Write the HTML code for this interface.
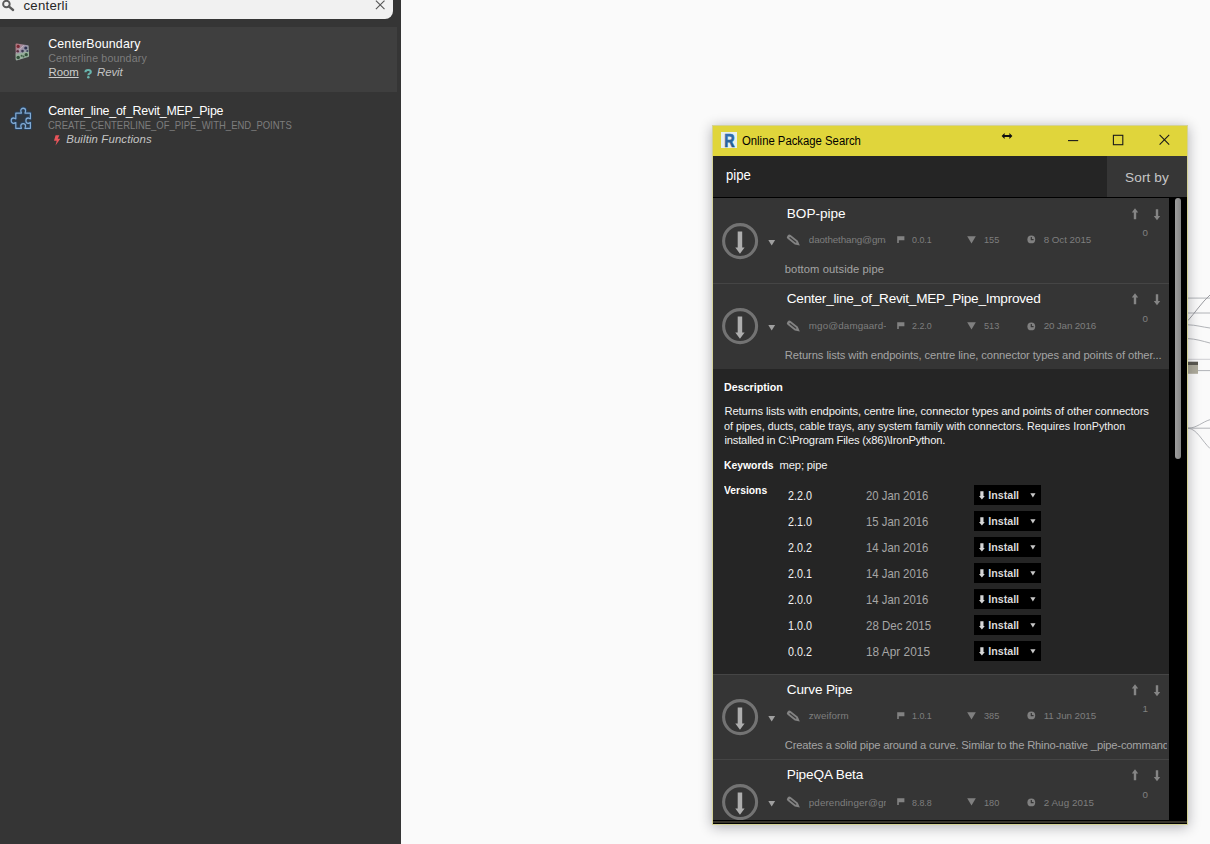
<!DOCTYPE html>
<html lang="en"><head><meta charset="utf-8"><title>Online Package Search</title>
<style>
html,body{margin:0;padding:0}
body{width:1210px;height:844px;overflow:hidden;position:relative;background:#fafafa;font-family:"Liberation Sans", sans-serif;}
.t{position:absolute;white-space:nowrap;line-height:1;display:block}
.clip{position:absolute;overflow:hidden;white-space:nowrap;line-height:1}
.clip>.t{left:0;top:0}
.ic{position:absolute;display:block;overflow:visible}
.abs{position:absolute}
#left{position:absolute;left:0;top:0;width:401px;height:844px;background:#353535}
#sbox{position:absolute;left:0;top:0;width:393px;height:19px;background:#f1f1f1;border-bottom-right-radius:8px}
#hl{position:absolute;left:0;top:27px;width:397px;height:65px;background:#3f3f3f}
#dlg{position:absolute;left:712px;top:125px;width:476px;height:700px;background:#000;box-shadow:0 2px 12px rgba(20,20,30,.32)}
#dlgb{position:absolute;left:712px;top:125px;width:474px;height:698px;border:1px solid #d4d296;pointer-events:none}
#tb{position:absolute;left:712px;top:125px;width:476px;height:31px;background:#e0d53b}
#sb{position:absolute;left:713px;top:156px;width:394px;height:41px;background:#252525}
#sort{position:absolute;left:1107px;top:156px;width:80px;height:41px;background:#363636}
.it{position:absolute;left:713px;width:456px;background:#353535}
.sep{position:absolute;left:713px;width:456px;height:1px;background:#454545}
#det{position:absolute;left:713px;top:369px;width:456px;height:305px;background:#252525}
#thumb{position:absolute;left:1175px;top:198px;width:6px;height:261px;background:linear-gradient(90deg,#9c9c9c,#868686);border-radius:3px}
.ib{position:absolute;left:974px;width:67px;height:19.6px;background:#000}
</style></head><body>
<svg class="ic" style="left:1188px;top:280px" width="22" height="180" viewBox="0 0 22 180">
<g fill="none" stroke="#a9abb0" stroke-width="0.9">
<path d="M0 18.1H22"/><path d="M0 33H22"/><path d="M0 44.8C8 45 14 47 22 48"/><path d="M0 58.6C8 59 14 61 22 63"/><path d="M0 79.3H22" stroke="#c9cacd"/>
<path d="M10 90.6H22"/><path d="M0 148.2C9 148 14 142 22 139.7"/><path d="M0 148.2H22"/><path d="M0 148.2C9 149 14 161 22 168.5"/>
<path d="M0 40.5C6 34 14 22 22 15" stroke="#8f9095"/>
</g><rect x="0" y="81.7" width="10" height="3.3" fill="#5a5850"/><rect x="0" y="85" width="10" height="8.8" fill="#aeab9c"/></svg>
<div id="left"></div><div id="hl"></div><div id="sbox"></div>
<svg class="ic" style="left:1px;top:0px" width="14" height="12" viewBox="0 0 14 12"><circle cx="5.4" cy="4" r="3.3" fill="none" stroke="#5a5a5a" stroke-width="1.9"/><path d="M7.8 6.4l4.3 3.6" stroke="#5a5a5a" stroke-width="2.3" stroke-linecap="round"/></svg>
<svg class="ic" style="left:375px;top:0px" width="11" height="11" viewBox="0 0 11 11"><path d="M0.9 0.6l8.6 8.6M9.5 0.6l-8.6 8.6" stroke="#555" stroke-width="1.1" fill="none"/></svg>
<!-- row1 icon -->
<svg class="ic" style="left:13px;top:41px" width="19" height="22" viewBox="0 0 19 22"><defs><linearGradient id="g1" x1="0" y1="0" x2="1" y2="1"><stop offset="0" stop-color="#b0757d"/><stop offset=".45" stop-color="#9a95ab"/><stop offset="1" stop-color="#8fac96"/></linearGradient></defs>
<path d="M3.6 3.5L14.6 5.4L15 14.9L3.9 18.3Z" fill="url(#g1)" stroke="url(#g1)" stroke-width="2.2" stroke-linejoin="round"/>
<path d="M2.7 12.8L15.8 10.6L15.9 15.1L4 19.2Q2.7 19.4 2.7 18Z" fill="#97b19b" opacity=".9"/>
<path d="M3.2 12.3L10.8 4.3" stroke="#cfc9d2" stroke-width="0.7"/>
<g><circle cx="5.2" cy="5.4" r="1.6" fill="#7a2832"/><circle cx="12.8" cy="7" r="1.6" fill="#2f3350"/><circle cx="4.7" cy="10.3" r="1.3" fill="#5a3040"/><circle cx="9.5" cy="10.1" r="1.35" fill="#3a3850"/><circle cx="14.3" cy="10" r="1.1" fill="#3f4660"/><circle cx="13.2" cy="13.7" r="1.65" fill="#33503a"/><circle cx="5.2" cy="16.4" r="1.75" fill="#33503a"/><circle cx="8.6" cy="14.7" r="1" fill="#3f6046"/><circle cx="10.5" cy="15.6" r="1" fill="#3f6046"/></g></svg>
<svg class="ic" style="left:83.5px;top:68.9px" width="8" height="10" viewBox="0 0 8 10"><path d="M1.4 3.3q.1-2.3 2.8-2.3 2.6 0 2.6 2 0 1-1.3 1.7-1.1 .6-1.1 1.5" fill="none" stroke="#69b5ae" stroke-width="2.1"/><circle cx="4.3" cy="8.3" r="1.25" fill="#69b5ae"/></svg>
<!-- row2 icon -->
<svg class="ic" style="left:9px;top:105.7px" width="24" height="26" viewBox="0 0 24 26"><g transform="scale(1 1.07)"><path d="M6.8 6.7h5.6c.3-.4-.6-1.3-.6-2.3 0-1.3 1-2.3 2.4-2.3s2.4 1 2.4 2.3c0 1-.9 1.9-.6 2.3h5.4v5.2c-.4.3-1.2-.7-2.2-.7-1.3 0-2.3 1.1-2.3 2.5s1 2.5 2.3 2.5c1 0 1.8-1 2.2-.7v5.4h-5.4c-.3-.4.6-1.2.6-2.2 0-1.3-1-2.3-2.4-2.3s-2.4 1-2.4 2.3c0 1 .9 1.8.6 2.2h-5.6v-5.4c-.4-.3-1.2.7-2.2.7-1.3 0-2.4-1.1-2.4-2.5s1.1-2.5 2.4-2.5c1 0 1.8 1 2.2.7z" fill="#2b3a4a" stroke="#1f4a7a" stroke-width="3.2" stroke-linejoin="round" opacity=".55"/><path d="M6.8 6.7h5.6c.3-.4-.6-1.3-.6-2.3 0-1.3 1-2.3 2.4-2.3s2.4 1 2.4 2.3c0 1-.9 1.9-.6 2.3h5.4v5.2c-.4.3-1.2-.7-2.2-.7-1.3 0-2.3 1.1-2.3 2.5s1 2.5 2.3 2.5c1 0 1.8-1 2.2-.7v5.4h-5.4c-.3-.4.6-1.2.6-2.2 0-1.3-1-2.3-2.4-2.3s-2.4 1-2.4 2.3c0 1 .9 1.8.6 2.2h-5.6v-5.4c-.4-.3-1.2.7-2.2.7-1.3 0-2.4-1.1-2.4-2.5s1.1-2.5 2.4-2.5c1 0 1.8 1 2.2.7z" fill="none" stroke="#82acd6" stroke-width="1.2" stroke-linejoin="round"/></g></svg>
<svg class="ic" style="left:53px;top:135px" width="8" height="11" viewBox="0 0 8 11"><path d="M2.6 0.2h3.8l-1.7 3.6h2.6l-4.8 6.8 1.2-4.9h-2.7z" fill="#e8545a"/></svg>
<span class="t m0" style="left:23.5px;top:-1.0px;font-size:13.2px;color:#262626;letter-spacing:0.238px;">centerli</span><span class="t m1" style="left:48.2px;top:38.0px;font-size:12.4px;color:#ffffff;letter-spacing:0.153px;">CenterBoundary</span><span class="t m2" style="left:48.2px;top:53.0px;font-size:10.6px;color:#7d7d7d;letter-spacing:0.173px;">Centerline boundary</span><span class="t m3" style="left:48.6px;top:67.0px;font-size:11.4px;color:#cdcdcd;letter-spacing:-0.083px;text-decoration:underline;text-underline-offset:1px;text-decoration-thickness:1px;">Room</span><span class="t m4" style="left:97.0px;top:67.0px;font-size:11.4px;color:#c4c4c4;font-style:italic;letter-spacing:-0.078px;">Revit</span><span class="t m5" style="left:48.2px;top:105.0px;font-size:12.4px;color:#ffffff;letter-spacing:-0.209px;">Center_line_of_Revit_MEP_Pipe</span><span class="t m6" style="left:48.2px;top:120.0px;font-size:10.6px;color:#7d7d7d;transform:scaleX(0.8948);transform-origin:0 0;">CREATE_CENTERLINE_OF_PIPE_WITH_END_POINTS</span><span class="t m7" style="left:66.2px;top:134.0px;font-size:11.4px;color:#c4c4c4;font-style:italic;letter-spacing:0.123px;">Builtin Functions</span>
<!-- dialog -->
<div id="dlg"></div>
<div id="tb"></div>
<div id="sb"></div><div id="sort"></div>
<div class="it" style="top:198px;height:85px"></div>
<div class="sep" style="top:283px"></div>
<div class="it" style="top:284px;height:85px"></div>
<div id="det"></div>
<div class="sep" style="top:674px"></div>
<div class="it" style="top:675px;height:84px"></div>
<div class="sep" style="top:759px"></div>
<div class="it" style="top:760px;height:60px"></div>
<div id="clipbox" style="position:absolute;left:0;top:0;width:1210px;height:820px;overflow:hidden">
<span class="t m11" style="left:786.8px;top:207.0px;font-size:13.6px;color:#ffffff;letter-spacing:-0.018px;">BOP-pipe</span><div class="clip" style="left:808.8px;top:235.0px;width:77.6px;height:12.25px;"><span class="t m12" style="font-size:9.8px;color:#7e7e7e;letter-spacing:-0.11px;">daothethang@gmail.com</span></div><span class="t m13" style="left:912.3px;top:235.0px;font-size:9.8px;color:#7e7e7e;transform:scaleX(0.9084);transform-origin:0 0;">0.0.1</span><span class="t m14" style="left:983.8px;top:235.0px;font-size:9.8px;color:#7e7e7e;transform:scaleX(0.9352);transform-origin:0 0;">155</span><span class="t m15" style="left:1043.7px;top:235.0px;font-size:9.8px;color:#7e7e7e;letter-spacing:-0.036px;">8 Oct 2015</span><span class="t m16" style="left:1142.6px;top:228.0px;font-size:9.8px;color:#808080;">0</span><span class="t m17" style="left:784.8px;top:264.0px;font-size:11.2px;color:#a4a4a4;letter-spacing:0.083px;">bottom outside pipe</span><svg class="ic" style="left:720px;top:221.0px" width="40" height="40" viewBox="0 0 40 40"><circle cx="20.1" cy="20.1" r="16.5" fill="none" stroke="#737373" stroke-width="3.1"/><path d="M17.7 10.5h4.5v16h2.4l-4.65 6.3-4.65-6.3h2.4z" fill="#aeaeae"/></svg><svg class="ic" style="left:767.6px;top:239.9px" width="8" height="6" viewBox="0 0 8 6"><path d="M0.3 0h6.8l-3.4 5.5z" fill="#a0a0a0"/></svg><svg class="ic" style="left:786px;top:233.5px" width="16" height="13" viewBox="0 0 16 13"><g transform="translate(1.7 1.8) rotate(38.5)"><path d="M1.8 -2.45h9.2l4.5 2.45-4.5 2.45h-9.2q-2 0-2-2.45t2-2.45z" fill="#838383"/><path d="M2.8 0h7.6" stroke="#3a3a3a" stroke-width="1.1" stroke-linecap="round"/></g></svg><svg class="ic" style="left:896.6px;top:235.8px" width="8" height="8" viewBox="0 0 8 8"><path d="M0.2 0.3h7.2v4h-5.6v2.6h-1.6z" fill="#828282"/></svg><svg class="ic" style="left:966.6px;top:235.6px" width="9" height="8" viewBox="0 0 9 8"><path d="M0.2 0.2h8.6l-4.3 7.4z" fill="#808080"/></svg><svg class="ic" style="left:1026.7px;top:235.3px" width="9" height="9" viewBox="0 0 9 9"><circle cx="4.3" cy="4.4" r="3.9" fill="#808080"/><path d="M4.3 2v2.7h2.3" fill="none" stroke="#353535" stroke-width="1.2"/></svg><svg class="ic" style="left:1131px;top:207.9px" width="8" height="12" viewBox="0 0 8 12"><path d="M4 0.2l3.2 4.3h-2v6.7h-2.4v-6.7h-2z" fill="#858585"/></svg><svg class="ic" style="left:1153px;top:208.6px" width="8" height="12" viewBox="0 0 8 12"><path d="M4 11.2l3.2-4.3h-2v-6.7h-2.4v6.7h-2z" fill="#858585"/></svg><span class="t m18" style="left:786.8px;top:292.0px;font-size:13.6px;color:#ffffff;letter-spacing:-0.245px;">Center_line_of_Revit_MEP_Pipe_Improved</span><div class="clip" style="left:808.8px;top:321.0px;width:77.6px;height:12.25px;"><span class="t m19" style="font-size:9.8px;color:#7e7e7e;letter-spacing:0.113px;">mgo@damgaard-ri.dk</span></div><span class="t m20" style="left:912.3px;top:321.0px;font-size:9.8px;color:#7e7e7e;transform:scaleX(0.9084);transform-origin:0 0;">2.2.0</span><span class="t m21" style="left:983.8px;top:321.0px;font-size:9.8px;color:#7e7e7e;transform:scaleX(0.9352);transform-origin:0 0;">513</span><span class="t m22" style="left:1043.7px;top:321.0px;font-size:9.8px;color:#7e7e7e;letter-spacing:-0.146px;">20 Jan 2016</span><span class="t m23" style="left:1142.6px;top:314.0px;font-size:9.8px;color:#808080;">0</span><span class="t m24" style="left:784.8px;top:350.0px;font-size:11.2px;color:#a4a4a4;letter-spacing:-0.086px;">Returns lists with endpoints, centre line, connector types and points of other...</span><svg class="ic" style="left:720px;top:306.2px" width="40" height="40" viewBox="0 0 40 40"><circle cx="20.1" cy="20.1" r="16.5" fill="none" stroke="#737373" stroke-width="3.1"/><path d="M17.7 10.5h4.5v16h2.4l-4.65 6.3-4.65-6.3h2.4z" fill="#aeaeae"/></svg><svg class="ic" style="left:767.6px;top:325.1px" width="8" height="6" viewBox="0 0 8 6"><path d="M0.3 0h6.8l-3.4 5.5z" fill="#a0a0a0"/></svg><svg class="ic" style="left:786px;top:319.7px" width="16" height="13" viewBox="0 0 16 13"><g transform="translate(1.7 1.8) rotate(38.5)"><path d="M1.8 -2.45h9.2l4.5 2.45-4.5 2.45h-9.2q-2 0-2-2.45t2-2.45z" fill="#838383"/><path d="M2.8 0h7.6" stroke="#3a3a3a" stroke-width="1.1" stroke-linecap="round"/></g></svg><svg class="ic" style="left:896.6px;top:322.0px" width="8" height="8" viewBox="0 0 8 8"><path d="M0.2 0.3h7.2v4h-5.6v2.6h-1.6z" fill="#828282"/></svg><svg class="ic" style="left:966.6px;top:321.8px" width="9" height="8" viewBox="0 0 9 8"><path d="M0.2 0.2h8.6l-4.3 7.4z" fill="#808080"/></svg><svg class="ic" style="left:1026.7px;top:321.5px" width="9" height="9" viewBox="0 0 9 9"><circle cx="4.3" cy="4.4" r="3.9" fill="#808080"/><path d="M4.3 2v2.7h2.3" fill="none" stroke="#353535" stroke-width="1.2"/></svg><svg class="ic" style="left:1131px;top:293.1px" width="8" height="12" viewBox="0 0 8 12"><path d="M4 0.2l3.2 4.3h-2v6.7h-2.4v-6.7h-2z" fill="#858585"/></svg><svg class="ic" style="left:1153px;top:293.8px" width="8" height="12" viewBox="0 0 8 12"><path d="M4 11.2l3.2-4.3h-2v-6.7h-2.4v6.7h-2z" fill="#858585"/></svg><span class="t m25" style="left:786.8px;top:683.0px;font-size:13.6px;color:#ffffff;letter-spacing:-0.153px;">Curve Pipe</span><span class="t m26" style="left:808.8px;top:711.0px;font-size:9.8px;color:#7e7e7e;letter-spacing:0.08px;">zweiform</span><span class="t m27" style="left:912.3px;top:711.0px;font-size:9.8px;color:#7e7e7e;transform:scaleX(0.9084);transform-origin:0 0;">1.0.1</span><span class="t m28" style="left:983.8px;top:711.0px;font-size:9.8px;color:#7e7e7e;transform:scaleX(0.9352);transform-origin:0 0;">385</span><span class="t m29" style="left:1043.7px;top:711.0px;font-size:9.8px;color:#7e7e7e;letter-spacing:-0.078px;">11 Jun 2015</span><span class="t m30" style="left:1142.6px;top:704.0px;font-size:9.8px;color:#808080;">1</span><div class="clip" style="left:784.8px;top:740.0px;width:382.5px;height:14.0px;"><span class="t m31" style="font-size:11.2px;color:#a4a4a4;letter-spacing:-0.171px;">Creates a solid pipe around a curve. Similar to the Rhino-native _pipe-command.</span></div><svg class="ic" style="left:720px;top:697.0px" width="40" height="40" viewBox="0 0 40 40"><circle cx="20.1" cy="20.1" r="16.5" fill="none" stroke="#737373" stroke-width="3.1"/><path d="M17.7 10.5h4.5v16h2.4l-4.65 6.3-4.65-6.3h2.4z" fill="#aeaeae"/></svg><svg class="ic" style="left:767.6px;top:715.9px" width="8" height="6" viewBox="0 0 8 6"><path d="M0.3 0h6.8l-3.4 5.5z" fill="#a0a0a0"/></svg><svg class="ic" style="left:786px;top:709.5px" width="16" height="13" viewBox="0 0 16 13"><g transform="translate(1.7 1.8) rotate(38.5)"><path d="M1.8 -2.45h9.2l4.5 2.45-4.5 2.45h-9.2q-2 0-2-2.45t2-2.45z" fill="#838383"/><path d="M2.8 0h7.6" stroke="#3a3a3a" stroke-width="1.1" stroke-linecap="round"/></g></svg><svg class="ic" style="left:896.6px;top:711.8px" width="8" height="8" viewBox="0 0 8 8"><path d="M0.2 0.3h7.2v4h-5.6v2.6h-1.6z" fill="#828282"/></svg><svg class="ic" style="left:966.6px;top:711.6px" width="9" height="8" viewBox="0 0 9 8"><path d="M0.2 0.2h8.6l-4.3 7.4z" fill="#808080"/></svg><svg class="ic" style="left:1026.7px;top:711.3px" width="9" height="9" viewBox="0 0 9 9"><circle cx="4.3" cy="4.4" r="3.9" fill="#808080"/><path d="M4.3 2v2.7h2.3" fill="none" stroke="#353535" stroke-width="1.2"/></svg><svg class="ic" style="left:1131px;top:683.9px" width="8" height="12" viewBox="0 0 8 12"><path d="M4 0.2l3.2 4.3h-2v6.7h-2.4v-6.7h-2z" fill="#858585"/></svg><svg class="ic" style="left:1153px;top:684.6px" width="8" height="12" viewBox="0 0 8 12"><path d="M4 11.2l3.2-4.3h-2v-6.7h-2.4v6.7h-2z" fill="#858585"/></svg><span class="t m32" style="left:786.8px;top:768.0px;font-size:13.6px;color:#ffffff;letter-spacing:-0.137px;">PipeQA Beta</span><div class="clip" style="left:808.8px;top:798.0px;width:77.6px;height:12.25px;"><span class="t m33" style="font-size:9.8px;color:#7e7e7e;letter-spacing:0.116px;">pderendinger@gmail.com</span></div><span class="t m34" style="left:912.3px;top:798.0px;font-size:9.8px;color:#7e7e7e;transform:scaleX(0.9084);transform-origin:0 0;">8.8.8</span><span class="t m35" style="left:983.8px;top:798.0px;font-size:9.8px;color:#7e7e7e;transform:scaleX(0.9352);transform-origin:0 0;">180</span><span class="t m36" style="left:1043.7px;top:798.0px;font-size:9.8px;color:#7e7e7e;letter-spacing:0.087px;">2 Aug 2015</span><span class="t m37" style="left:1142.6px;top:790.0px;font-size:9.8px;color:#808080;">0</span><svg class="ic" style="left:720px;top:782.3px" width="40" height="40" viewBox="0 0 40 40"><circle cx="20.1" cy="20.1" r="16.5" fill="none" stroke="#737373" stroke-width="3.1"/><path d="M17.7 10.5h4.5v16h2.4l-4.65 6.3-4.65-6.3h2.4z" fill="#aeaeae"/></svg><svg class="ic" style="left:767.6px;top:801.2px" width="8" height="6" viewBox="0 0 8 6"><path d="M0.3 0h6.8l-3.4 5.5z" fill="#a0a0a0"/></svg><svg class="ic" style="left:786px;top:795.8px" width="16" height="13" viewBox="0 0 16 13"><g transform="translate(1.7 1.8) rotate(38.5)"><path d="M1.8 -2.45h9.2l4.5 2.45-4.5 2.45h-9.2q-2 0-2-2.45t2-2.45z" fill="#838383"/><path d="M2.8 0h7.6" stroke="#3a3a3a" stroke-width="1.1" stroke-linecap="round"/></g></svg><svg class="ic" style="left:896.6px;top:798.1px" width="8" height="8" viewBox="0 0 8 8"><path d="M0.2 0.3h7.2v4h-5.6v2.6h-1.6z" fill="#828282"/></svg><svg class="ic" style="left:966.6px;top:797.9px" width="9" height="8" viewBox="0 0 9 8"><path d="M0.2 0.2h8.6l-4.3 7.4z" fill="#808080"/></svg><svg class="ic" style="left:1026.7px;top:797.6px" width="9" height="9" viewBox="0 0 9 9"><circle cx="4.3" cy="4.4" r="3.9" fill="#808080"/><path d="M4.3 2v2.7h2.3" fill="none" stroke="#353535" stroke-width="1.2"/></svg><svg class="ic" style="left:1131px;top:769.2px" width="8" height="12" viewBox="0 0 8 12"><path d="M4 0.2l3.2 4.3h-2v6.7h-2.4v-6.7h-2z" fill="#858585"/></svg><svg class="ic" style="left:1153px;top:769.9px" width="8" height="12" viewBox="0 0 8 12"><path d="M4 11.2l3.2-4.3h-2v-6.7h-2.4v6.7h-2z" fill="#858585"/></svg>
</div>
<span class="t m38" style="left:724.4px;top:382.0px;font-size:11.2px;color:#ffffff;font-weight:700;transform:scaleX(0.957);transform-origin:0 0;">Description</span><span class="t m39" style="left:724.4px;top:406.0px;font-size:11.2px;color:#f2f2f2;letter-spacing:-0.094px;">Returns lists with endpoints, centre line, connector types and points of other connectors</span><span class="t m40" style="left:724.4px;top:421.0px;font-size:11.2px;color:#f2f2f2;transform:scaleX(0.9633);transform-origin:0 0;">of pipes, ducts, cable trays, any system family with connectors. Requires IronPython</span><span class="t m41" style="left:724.4px;top:435.0px;font-size:11.2px;color:#f2f2f2;letter-spacing:-0.17px;">installed in C:\Program Files (x86)\IronPython.</span><span class="t m42" style="left:724.4px;top:460.0px;font-size:11.2px;color:#ffffff;font-weight:700;transform:scaleX(0.9258);transform-origin:0 0;">Keywords</span><span class="t m43" style="left:779.6px;top:460.0px;font-size:11.2px;color:#f2f2f2;letter-spacing:-0.158px;">mep; pipe</span><span class="t m44" style="left:724.2px;top:485.0px;font-size:11.2px;color:#ffffff;font-weight:700;transform:scaleX(0.9262);transform-origin:0 0;">Versions</span><span class="t m45" style="left:787.6px;top:490.0px;font-size:12.8px;color:#f2f2f2;transform:scaleX(0.8395);transform-origin:0 0;">2.2.0</span><span class="t m46" style="left:866.4px;top:490.0px;font-size:12.8px;color:#a6a6a6;transform:scaleX(0.8843);transform-origin:0 0;">20 Jan 2016</span><div class="ib" style="top:485.3px"></div><svg class="ic" style="left:979px;top:491.2px" width="6" height="9" viewBox="0 0 6 9"><path d="M1.3 0.3h3.2v4.7h1.3l-2.9 3.5-2.9-3.5h1.3z" fill="#d6d6d6"/></svg><span class="t m47" style="left:988.2px;top:490.0px;font-size:10.7px;color:#d8d8d8;font-weight:700;">Install</span><svg class="ic" style="left:1030px;top:493.1px" width="6" height="5" viewBox="0 0 6 5"><path d="M0.3 0.3h5.2l-2.6 4.2z" fill="#c8c8c8"/></svg><span class="t m48" style="left:787.6px;top:516.0px;font-size:12.8px;color:#f2f2f2;transform:scaleX(0.8395);transform-origin:0 0;">2.1.0</span><span class="t m49" style="left:866.4px;top:516.0px;font-size:12.8px;color:#a6a6a6;transform:scaleX(0.8843);transform-origin:0 0;">15 Jan 2016</span><div class="ib" style="top:511.3px"></div><svg class="ic" style="left:979px;top:517.2px" width="6" height="9" viewBox="0 0 6 9"><path d="M1.3 0.3h3.2v4.7h1.3l-2.9 3.5-2.9-3.5h1.3z" fill="#d6d6d6"/></svg><span class="t m50" style="left:988.2px;top:516.0px;font-size:10.7px;color:#d8d8d8;font-weight:700;">Install</span><svg class="ic" style="left:1030px;top:519.1px" width="6" height="5" viewBox="0 0 6 5"><path d="M0.3 0.3h5.2l-2.6 4.2z" fill="#c8c8c8"/></svg><span class="t m51" style="left:787.6px;top:542.0px;font-size:12.8px;color:#f2f2f2;transform:scaleX(0.8395);transform-origin:0 0;">2.0.2</span><span class="t m52" style="left:866.4px;top:542.0px;font-size:12.8px;color:#a6a6a6;transform:scaleX(0.8843);transform-origin:0 0;">14 Jan 2016</span><div class="ib" style="top:537.3px"></div><svg class="ic" style="left:979px;top:543.2px" width="6" height="9" viewBox="0 0 6 9"><path d="M1.3 0.3h3.2v4.7h1.3l-2.9 3.5-2.9-3.5h1.3z" fill="#d6d6d6"/></svg><span class="t m53" style="left:988.2px;top:542.0px;font-size:10.7px;color:#d8d8d8;font-weight:700;">Install</span><svg class="ic" style="left:1030px;top:545.1px" width="6" height="5" viewBox="0 0 6 5"><path d="M0.3 0.3h5.2l-2.6 4.2z" fill="#c8c8c8"/></svg><span class="t m54" style="left:787.6px;top:568.0px;font-size:12.8px;color:#f2f2f2;transform:scaleX(0.8395);transform-origin:0 0;">2.0.1</span><span class="t m55" style="left:866.4px;top:568.0px;font-size:12.8px;color:#a6a6a6;transform:scaleX(0.8843);transform-origin:0 0;">14 Jan 2016</span><div class="ib" style="top:563.3px"></div><svg class="ic" style="left:979px;top:569.2px" width="6" height="9" viewBox="0 0 6 9"><path d="M1.3 0.3h3.2v4.7h1.3l-2.9 3.5-2.9-3.5h1.3z" fill="#d6d6d6"/></svg><span class="t m56" style="left:988.2px;top:568.0px;font-size:10.7px;color:#d8d8d8;font-weight:700;">Install</span><svg class="ic" style="left:1030px;top:571.1px" width="6" height="5" viewBox="0 0 6 5"><path d="M0.3 0.3h5.2l-2.6 4.2z" fill="#c8c8c8"/></svg><span class="t m57" style="left:787.6px;top:594.0px;font-size:12.8px;color:#f2f2f2;transform:scaleX(0.8395);transform-origin:0 0;">2.0.0</span><span class="t m58" style="left:866.4px;top:594.0px;font-size:12.8px;color:#a6a6a6;transform:scaleX(0.8843);transform-origin:0 0;">14 Jan 2016</span><div class="ib" style="top:589.3px"></div><svg class="ic" style="left:979px;top:595.2px" width="6" height="9" viewBox="0 0 6 9"><path d="M1.3 0.3h3.2v4.7h1.3l-2.9 3.5-2.9-3.5h1.3z" fill="#d6d6d6"/></svg><span class="t m59" style="left:988.2px;top:594.0px;font-size:10.7px;color:#d8d8d8;font-weight:700;">Install</span><svg class="ic" style="left:1030px;top:597.1px" width="6" height="5" viewBox="0 0 6 5"><path d="M0.3 0.3h5.2l-2.6 4.2z" fill="#c8c8c8"/></svg><span class="t m60" style="left:787.6px;top:620.0px;font-size:12.8px;color:#f2f2f2;transform:scaleX(0.8395);transform-origin:0 0;">1.0.0</span><span class="t m61" style="left:866.4px;top:620.0px;font-size:12.8px;color:#a6a6a6;transform:scaleX(0.897);transform-origin:0 0;">28 Dec 2015</span><div class="ib" style="top:615.3px"></div><svg class="ic" style="left:979px;top:621.2px" width="6" height="9" viewBox="0 0 6 9"><path d="M1.3 0.3h3.2v4.7h1.3l-2.9 3.5-2.9-3.5h1.3z" fill="#d6d6d6"/></svg><span class="t m62" style="left:988.2px;top:620.0px;font-size:10.7px;color:#d8d8d8;font-weight:700;">Install</span><svg class="ic" style="left:1030px;top:623.1px" width="6" height="5" viewBox="0 0 6 5"><path d="M0.3 0.3h5.2l-2.6 4.2z" fill="#c8c8c8"/></svg><span class="t m63" style="left:787.6px;top:646.0px;font-size:12.8px;color:#f2f2f2;transform:scaleX(0.8395);transform-origin:0 0;">0.0.2</span><span class="t m64" style="left:866.4px;top:646.0px;font-size:12.8px;color:#a6a6a6;transform:scaleX(0.9271);transform-origin:0 0;">18 Apr 2015</span><div class="ib" style="top:641.3px"></div><svg class="ic" style="left:979px;top:647.2px" width="6" height="9" viewBox="0 0 6 9"><path d="M1.3 0.3h3.2v4.7h1.3l-2.9 3.5-2.9-3.5h1.3z" fill="#d6d6d6"/></svg><span class="t m65" style="left:988.2px;top:646.0px;font-size:10.7px;color:#d8d8d8;font-weight:700;">Install</span><svg class="ic" style="left:1030px;top:649.1px" width="6" height="5" viewBox="0 0 6 5"><path d="M0.3 0.3h5.2l-2.6 4.2z" fill="#c8c8c8"/></svg>
<div class="abs" style="left:713px;top:821px;width:474px;height:2px;background:#37342b"></div><div id="thumb"></div>
<div id="dlgb"></div>
<!-- title bar -->
<svg class="ic" style="left:721px;top:132px" width="16" height="16" viewBox="0 0 16 16"><defs><linearGradient id="rg" x1="0" y1="0" x2="0.3" y2="1"><stop offset="0" stop-color="#3a78bf"/><stop offset="1" stop-color="#1f5a8c"/></linearGradient></defs><rect x="0" y="0" width="16" height="16" fill="#e6f0ee"/><text transform="translate(3.2 14.9) scale(.8 1)" font-family="Liberation Sans, sans-serif" font-weight="700" font-size="18" fill="url(#rg)" stroke="url(#rg)" stroke-width="0.7">R</text></svg>
<svg class="ic" style="left:1001px;top:132px" width="12" height="8" viewBox="0 0 12 8"><path d="M0.6 4l3-2.9v2h4.8v-2l3 2.9-3 2.9v-2h-4.8v2z" fill="#111"/></svg>
<svg class="ic" style="left:1068px;top:140px" width="11" height="2" viewBox="0 0 11 2"><path d="M0 .6h10.2" stroke="#1a1a1a" stroke-width="1.1"/></svg>
<svg class="ic" style="left:1112px;top:134px" width="12" height="12" viewBox="0 0 12 12"><rect x="1.4" y="1.3" width="9.4" height="9.4" fill="none" stroke="#1a1a1a" stroke-width="1.1"/></svg>
<svg class="ic" style="left:1159px;top:134px" width="12" height="12" viewBox="0 0 12 12"><path d="M0.6 0.9l9.6 9.8M10.2 0.9l-9.6 9.8" stroke="#1a1a1a" stroke-width="1.1" fill="none"/></svg>
<span class="t m8" style="left:742.4px;top:135.0px;font-size:12.0px;color:#000000;transform:scaleX(0.9431);transform-origin:0 0;">Online Package Search</span><span class="t m9" style="left:725.5px;top:168.0px;font-size:14.0px;color:#ffffff;transform:scaleX(0.9407);transform-origin:0 0;">pipe</span><span class="t m10" style="left:1125.1px;top:171.0px;font-size:13.6px;color:#c6c6c6;letter-spacing:0.096px;">Sort by</span>
</body></html>
